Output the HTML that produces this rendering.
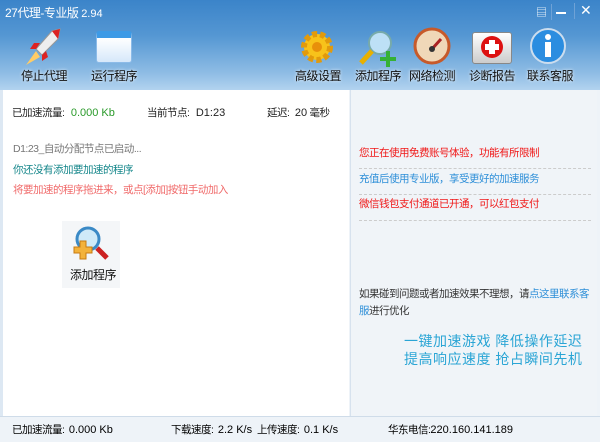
<!DOCTYPE html>
<html><head><meta charset="utf-8"><style>
*{margin:0;padding:0;box-sizing:border-box}
body{width:600px;height:442px;overflow:hidden;font-family:"Liberation Sans","Noto Sans CJK SC",sans-serif;font-size:10.5px;letter-spacing:-0.5px;background:#eef3f8;position:relative}
.n{letter-spacing:0;font-size:11px}
.top{position:absolute;left:0;top:0;width:600px;height:90px;background:linear-gradient(#3b84c9 0%,#5597d3 40%,#8dbbe4 80%,#b2d3ef 100%)}
.title{position:absolute;left:5px;top:4px;color:#fff;font-size:12px;letter-spacing:-0.5px}
.btn{position:absolute;top:67px;color:#111;font-size:12px;letter-spacing:-0.5px;text-align:center;width:64px;text-shadow:0 0 3px #fff}
.ic{position:absolute}
.left{position:absolute;left:0;top:90px;width:349px;height:326px;background:#fff;border-left:3px solid #dde8f3}
.right{position:absolute;left:350px;top:90px;width:247px;height:326px;background:#f0f4f8;border-left:1px solid #d7e2ee;overflow:hidden}
.t{position:absolute;white-space:nowrap;line-height:16px}
.foot{position:absolute;left:0;top:416px;width:600px;height:26px;background:#eef3f8;border-top:1px solid #cfdce9;overflow:hidden}
.dash{position:absolute;left:8px;width:232px;border-top:1px dashed #ccc}
</style></head><body>
<div class="top">
<div class="title">27代理-专业版 <span class="n">2.94</span></div>
<div class="t" style="left:536px;top:5px;color:#fff;font-size:11px">▤</div>
<div style="position:absolute;left:551px;top:4px;width:1px;height:16px;background:#6fa2d6"></div>
<div style="position:absolute;left:556px;top:12px;width:10px;height:2px;background:#fff"></div>
<div style="position:absolute;left:574px;top:3px;width:1px;height:16px;background:#6fa2d6"></div>
<div class="t" style="left:580px;top:2px;color:#fff;font-size:14px">✕</div>
<svg class="ic" style="left:22px;top:27px" width="44" height="40"><path d="M38 2 L30 4 L14 22 L20 28 L36 12 Z" fill="#eee" stroke="#999"/><path d="M38 2 L30 4 L36 12 Z" fill="#d22"/><path d="M14 22 L8 22 L12 16 L18 16Z M20 28 L20 34 L26 30 L24 24Z" fill="#d22"/><path d="M14 24 L4 38 L18 30Z" fill="#fc6"/></svg>
<div class="btn" style="left:12px">停止代理</div>
<div class="ic" style="left:96px;top:31px;width:36px;height:32px;border-radius:3px;background:linear-gradient(#fff,#d6e8fa);border:1px solid #8cbbe8;border-top:7px solid #3d9ae6"></div>
<div class="btn" style="left:82px">运行程序</div>
<svg class="ic" style="left:299px;top:29px" width="36" height="36"><circle cx="18" cy="18" r="13" fill="#f8c21a" stroke="#e29a0c" stroke-width="6" stroke-dasharray="5 3"/><circle cx="18" cy="18" r="5" fill="#e8900a"/></svg>
<div class="btn" style="left:286px">高级设置</div>
<svg class="ic" style="left:358px;top:29px" width="40" height="38"><circle cx="22" cy="14" r="11" fill="#bde0f6" stroke="#7aa" stroke-width="2"/><path d="M14 22 L3 34" stroke="#e8b000" stroke-width="5"/><path d="M28 22 h4 v6 h6 v4 h-6 v6 h-4 v-6 h-6 v-4 h6z" fill="#35b135"/></svg>
<div class="btn" style="left:346px">添加程序</div>
<svg class="ic" style="left:413px;top:27px" width="38" height="38"><circle cx="19" cy="19" r="17" fill="#f0d8b8" stroke="#c75a2a" stroke-width="3"/><path d="M19 22 L28 12" stroke="#a22" stroke-width="3"/><circle cx="19" cy="22" r="3" fill="#333"/></svg>
<div class="btn" style="left:400px">网络检测</div>
<div class="ic" style="left:472px;top:32px;width:40px;height:32px;background:linear-gradient(#fff,#ccc);border:1px solid #888;border-radius:3px"></div>
<svg class="ic" style="left:480px;top:34px" width="24" height="26"><circle cx="12" cy="13" r="11" fill="#d11"/><path d="M9 6h6v4h4v6h-4v4h-6v-4h-4v-6h4z" fill="#fff"/></svg>
<div class="btn" style="left:460px">诊断报告</div>
<svg class="ic" style="left:529px;top:27px" width="38" height="38"><circle cx="19" cy="19" r="17" fill="#2b8de0" stroke="#cde" stroke-width="2"/><circle cx="19" cy="10" r="3" fill="#fff"/><rect x="16" y="15" width="6" height="15" fill="#fff"/></svg>
<div class="btn" style="left:518px">联系客服</div>
</div>
<div class="left">
<div class="t" style="left:9px;top:15px;color:#222">已加速流量: <span class="n" style="color:#2a9a2a;margin-left:4px">0.000 Kb</span></div>
<div class="t" style="left:144px;top:15px;color:#222">当前节点: <span class="n" style="margin-left:4px">D1:23</span></div>
<div class="t" style="left:264px;top:15px;color:#222">延迟: <span class="n" style="margin-left:3px">20</span> 毫秒</div>
<div class="t" style="left:10px;top:51px;color:#777">D1:23_自动分配节点已启动...</div>
<div class="t" style="left:10px;top:72px;color:#14868a">你还没有添加要加速的程序</div>
<div class="t" style="left:10px;top:92px;color:#f06a6a">将要加速的程序拖进来，或点[添加]按钮手动加入</div>
<div style="position:absolute;left:59px;top:131px;width:58px;height:67px;background:#f4f6f8"></div>
<svg class="ic" style="left:68px;top:136px" width="44" height="36"><circle cx="17" cy="13" r="11" fill="#cfeaf8" stroke="#3b8ac6" stroke-width="3"/><path d="M26 22 L36 32" stroke="#c22" stroke-width="5"/><path d="M9 15h6v6h6v6h-6v6h-6v-6h-6v-6h6z" fill="#f3b23a" stroke="#c77a10"/></svg>
<div class="t" style="left:67px;top:177px;color:#111;font-size:12px;letter-spacing:-0.5px">添加程序</div>
</div>
<div class="right">
<div class="t" style="left:8px;top:55px;color:#f01818">您正在使用免费账号体验，功能有所限制</div>
<div class="dash" style="top:78px"></div>
<div class="t" style="left:8px;top:81px;color:#2e8fd8">充值后使用专业版，享受更好的加速服务</div>
<div class="dash" style="top:104px"></div>
<div class="t" style="left:8px;top:106px;color:#f01818">微信钱包支付通道已开通，可以红包支付</div>
<div class="dash" style="top:130px"></div>
<div class="t" style="left:8px;top:196px;color:#333">如果碰到问题或者加速效果不理想，请<span style="color:#2e8fd8">点这里联系客</span></div>
<div class="t" style="left:8px;top:213px;color:#333"><span style="color:#2e8fd8">服</span>进行优化</div>
<div class="t" style="left:53px;top:243px;color:#2aa5d5;font-size:14px;letter-spacing:0.5px">一键加速游戏 降低操作延迟</div>
<div class="t" style="left:53px;top:261px;color:#2aa5d5;font-size:14px;letter-spacing:0.5px">提高响应速度 抢占瞬间先机</div>
</div>
<div class="foot">
<div class="t" style="left:12px;top:5px">已加速流量: <span class="n" style="margin-left:2px">0.000 Kb</span></div>
<div class="t" style="left:171px;top:5px">下载速度: <span class="n" style="margin-left:2px">2.2 K/s</span></div>
<div class="t" style="left:257px;top:5px">上传速度: <span class="n" style="margin-left:2px">0.1 K/s</span></div>
<div class="t" style="left:388px;top:5px">华东电信:<span class="n">220.160.141.189</span></div>
</div>
</body></html>
